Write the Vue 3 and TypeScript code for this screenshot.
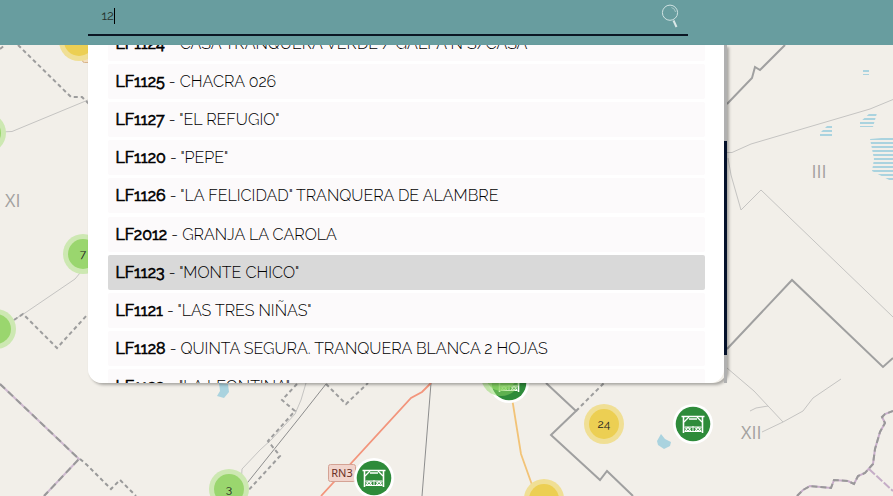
<script setup lang="ts">
interface Place {
  code: string
  name: string
  active?: boolean
}

interface Cluster {
  x: number
  y: number
  label: string
  tone: 'green' | 'yellow'
}

const query = '12'

const places: Place[] = [
  { code: 'LF1124', name: 'CASA TRANQUERA VERDE / GALPA`N S/CASA' },
  { code: 'LF1125', name: 'CHACRA 026' },
  { code: 'LF1127', name: '"EL REFUGIO"' },
  { code: 'LF1120', name: '"PEPE"' },
  { code: 'LF1126', name: '"LA FELICIDAD" TRANQUERA DE ALAMBRE' },
  { code: 'LF2012', name: 'GRANJA LA CAROLA' },
  { code: 'LF1123', name: '"MONTE CHICO"', active: true },
  { code: 'LF1121', name: '"LAS TRES NIÑAS"' },
  { code: 'LF1128', name: 'QUINTA SEGURA. TRANQUERA BLANCA 2 HOJAS' },
  { code: 'LF1122', name: '"LA LEONTINA"' },
]

const clusters: Cluster[] = [
  { x: 79, y: 41, label: '', tone: 'yellow' },
  { x: -14, y: 133, label: '', tone: 'green' },
  { x: 83, y: 254, label: '7', tone: 'green' },
  { x: -4, y: 329, label: '', tone: 'green' },
  { x: 229, y: 489, label: '3', tone: 'green' },
  { x: 604, y: 424, label: '24', tone: 'yellow' },
  { x: 544, y: 499, label: '', tone: 'yellow' },
]

const gates = [
  { x: 374, y: 478 },
  { x: 693, y: 424 },
  { x: 509, y: 383 },
]
</script>

<template>
  <div class="screen">
    <svg class="map" width="893" height="496" viewBox="0 0 893 496">
      <defs>
        <pattern id="marsh" width="8" height="4" patternUnits="userSpaceOnUse">
          <rect width="8" height="2" y="1" fill="#aad3df" />
        </pattern>
        <g id="gate">
          <circle r="20" fill="#fff" />
          <circle r="17.3" fill="#2e8b3a" />
          <g fill="none" stroke="#fff">
            <path d="M-11.500 -7.500H11.500" stroke-width="1.500" />
            <path d="M-9.500 -7V9M9.500 -7V9" stroke-width="1.600" />
            <path d="M-9 -2L-4 -7M9 -2L4 -7M-4 -5H4" stroke-width="1.300" />
            <path d="M-8.500 3H8.500M-8.500 7.500H8.500" stroke-width="1" />
            <path d="M-8 3.500L-5 7L-2 3.500M-8 7L-5 3.500L-2 7M2 3.500L5 7L8 3.500M2 7L5 3.500L8 7M0 2V8" stroke-width="1" />
            <circle cx="-5" cy="5.200" r="1.800" stroke-width=".8" />
            <circle cx="5" cy="5.200" r="1.800" stroke-width=".8" />
          </g>
        </g>
      </defs>
      <rect width="893" height="496" fill="#f2efe9" />

      <g fill="none" stroke="#c5c4c2" stroke-width="1">
        <path d="M0 132L12 131.500L88 100" />
        <path d="M0 328L25 313L75 279L90 261" />
        <path d="M727 152.500L732 152.500L751 144L870 109L893 99.500" />
        <path d="M728 158L731 175L741 210L761 190L893 317" />
        <path d="M727 368L754 391L783 422L803 411L813 398L841 379M762 432L783 422M750 411L756 408L768 406" />
        <path d="M306 383L301 400L295 414L272 439L260 450L242 469L241 487" />
      </g>
      <g fill="none" stroke="#8d8d8d" stroke-width="1">
        <path d="M326 384L300 417L240 492L233 500" />
        <path d="M431 383L422 496" />
      </g>
      <g fill="none" stroke="#a0a0a0" stroke-width="2">
        <path d="M727 104L752 78L755 67L760 70L785 45" />
        <path d="M727 349L792 280L883 367L893 358" />
        <path d="M546 383L576 411L551 435L600 480L607 471L633 496" />
      </g>
      <g fill="none" stroke="#9d9d9d" stroke-width="2" stroke-dasharray="4 3">
        <path d="M18 45L71 97L82 97L90 105M0 49L5 45" />
        <path d="M14 320L23 314L57 348L88 314" />
        <path d="M297 384L282 400L295 411L268 441L280 456L245 494" />
        <path d="M326 384L346 404L368 383" />
        <path d="M576 411L607 380" />
      </g>
      <g fill="none" stroke-width="2">
        <path d="M0 384L79 459L44 496" stroke="#ceb9cf" />
        <path d="M0 384L79 459L44 496" stroke="#999" stroke-dasharray="7 4" />
        <path d="M80 459L87 465L98 476L111 489L120 480L136 496" stroke="#999" stroke-dasharray="4 3" />
        <path d="M797 496L803 490L810 486L831 488L834 480L848 481L854 484L858 476L865 473L873 464L875 449L880 432L885 423L882 417L885 414L893 411" stroke="#c9afcb" />
        <path d="M797 496L803 490L810 486L831 488L834 480L848 481L854 484L858 476L865 473L873 464L875 449L880 432L885 423L882 417L885 414L893 411" stroke="#999" stroke-dasharray="6 3" />
        <path d="M869 469L893 491" stroke="#c5adc7" stroke-dasharray="8 2" />
      </g>

      <path d="M431 383L422 392L411 398L321 496" fill="none" stroke="#f3957c" stroke-width="1.800" />
      <path d="M512 398L521 454L536 496" fill="none" stroke="#f2c377" stroke-width="1.800" />

      <path d="M219 383L228 384L229 392L224 398L217 396L220 391Z M661 434L665 439L671 442L670 446L664 449L658 445L657 441Z" fill="#aad3df" />
      <g fill="url(#marsh)" transform="translate(0 1)">
        <path d="M863 67H869V74H863Z" />
        <path d="M827 125H832V137H820V132Z" />
        <path d="M870 112H877L873 126H860V121Z" />
        <path d="M870 138L893 136V181L872 170L874 158Z" />
      </g>

      <rect x="82.500" y="40.500" width="20" height="22" rx="2" fill="#f4dfc1" stroke="#d8b489" />
      <g class="area-label">
        <text x="5" y="207">XI</text>
        <text x="811.500" y="178">III</text>
        <text x="741" y="439">XII</text>
      </g>
      <rect x="328.500" y="464.500" width="27" height="17" rx="2" fill="#f1d4cc" stroke="#d4a294" />
      <text class="road-label" x="342" y="477">RN3</text>

      <use v-for="gate in gates" :key="gate.x" href="#gate" :x="gate.x" :y="gate.y" />
      <g fill="#8ed766">
        <circle cx="501" cy="376" r="20" opacity=".5" />
        <circle cx="501" cy="376" r="15" opacity=".7" />
      </g>
      <g v-for="(c, i) in clusters" :key="i" :class="['cluster', c.tone]">
        <circle class="halo" :cx="c.x" :cy="c.y" r="20" />
        <circle class="core" :cx="c.x" :cy="c.y" r="15" />
        <text :x="c.x" :y="c.y + 4">{{ c.label }}</text>
      </g>
    </svg>

    <header class="topbar">
      <div class="search">
        <span class="query">{{ query }}</span>
        <span class="caret"></span>
        <svg class="lens" width="20" height="28" viewBox="0 0 20 28" fill="none">
          <circle cx="10" cy="12.700" r="7.600" stroke="#cfe2e2" />
          <path d="M11.500 7.500Q15 8.500 15.500 12" stroke="#a9c8c8" />
          <path d="M13.500 20.500L16.500 27" stroke="#dbe8e8" stroke-width="2" />
        </svg>
      </div>
    </header>

    <section class="dropdown">
      <div class="panel">
        <ul class="results">
          <li v-for="place in places" :key="place.code" :class="{ active: place.active }">
            <b>{{ place.code }}</b><span class="name"> - {{ place.name }}</span>
          </li>
        </ul>
      </div>
      <div class="track"><div class="thumb"></div></div>
    </section>
  </div>
</template>

<style>
body {
  overflow: hidden;
}
</style>

<style scoped>
.screen {
  position: relative;
  width: 893px;
  height: 496px;
  overflow: hidden;
  font-family: Raleway, Lato, sans-serif;
}
.map {
  position: absolute;
  inset: 0;
}
.area-label {
  font: 18px "Open Sans", sans-serif;
  fill: #a3a19f;
}
.road-label {
  font: 11px "Noto Sans", sans-serif;
  fill: #6b3027;
  text-anchor: middle;
}
.cluster text {
  font-size: 12px;
  fill: #222;
  text-anchor: middle;
}
.green .halo {
  fill: #cde8b2;
}
.green .core {
  fill: #9ad66e;
}
.yellow .halo {
  fill: #f0df95;
}
.yellow .core {
  fill: #eccf53;
}
.topbar {
  position: relative;
  height: 45px;
  padding-left: 88px;
  background: #689d9f;
}
.search {
  display: flex;
  box-sizing: border-box;
  width: 600px;
  height: 36px;
  padding: 0 8px 0 13.500px;
  border-bottom: 2px solid #0b1724;
}
.query {
  padding-top: 6px;
  font-size: 13px;
  line-height: 20px;
  color: #26332d;
}
.caret {
  width: 1px;
  height: 16px;
  margin-top: 8px;
  background: #000;
}
.lens {
  margin-left: auto;
}
.dropdown {
  position: relative;
  display: flex;
  width: 639px;
  height: 338px;
  margin-left: 88px;
  border-radius: 0 0 14px 14px;
  box-shadow: 2px 2px 3px rgba(0, 0, 0, 0.3);
}
.panel {
  box-sizing: border-box;
  width: 636px;
  padding: 0 19px 0 20px;
  overflow: hidden;
  background: #fff;
  border-radius: 0 0 14px 14px;
}
.track {
  width: 3px;
  padding-top: 96px;
  box-sizing: border-box;
  background: #b0b0b0;
}
.thumb {
  height: 214px;
  background: #04112b;
}
.results {
  display: flex;
  flex-direction: column;
  gap: 3.150px;
  margin: -19.200px 0 0;
  padding: 0;
  list-style: none;
}
.results li {
  flex: none;
  box-sizing: border-box;
  height: 35px;
  padding-left: 7.500px;
  border-radius: 2px;
  background: #fcfafb;
  color: #000;
  font-size: 16px;
  line-height: 35px;
  white-space: nowrap;
}
.results li.active {
  background: #d9d9d9;
}
b {
  font-weight: 400;
  -webkit-text-stroke: 0.650px #000;
}
.name {
  font-weight: 300;
  white-space: pre;
}
</style>
